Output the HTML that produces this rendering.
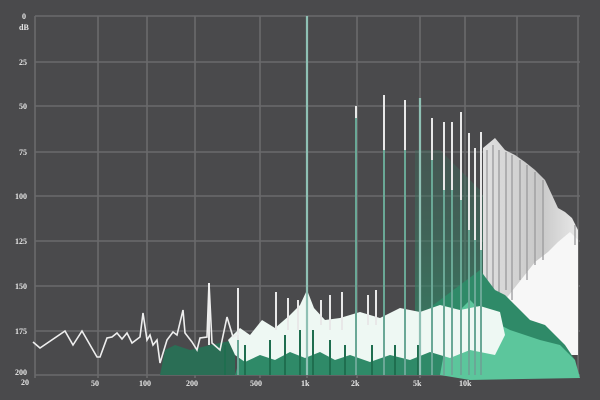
<!DOCTYPE html>
<html><head><meta charset="utf-8"><style>
html,body{margin:0;padding:0;background:#4a4a4c;width:600px;height:400px;overflow:hidden}
svg{display:block}
text{font-family:"Liberation Serif",serif;font-size:8px;fill:#e8e8e8;font-weight:bold}
</style></head><body>
<svg width="600" height="400" viewBox="0 0 600 400" xmlns="http://www.w3.org/2000/svg">
<defs>
<linearGradient id="bl" x1="0" y1="0" x2="1" y2="0">
<stop offset="0" stop-color="#e0e0e0"/><stop offset="0.6" stop-color="#c8c8c8"/><stop offset="1" stop-color="#e8e8e8"/>
</linearGradient>
<linearGradient id="gv" x1="0" y1="0" x2="0" y2="1">
<stop offset="0" stop-color="#3d6e5e" stop-opacity="0.5"/><stop offset="1" stop-color="#2f8a68"/>
</linearGradient>
</defs>
<rect width="600" height="400" fill="#4a4a4c"/>
<g stroke="#6a6a6c" stroke-width="1.6">
<line x1="35" y1="16" x2="580" y2="16"/>
<line x1="35" y1="62" x2="580" y2="62"/>
<line x1="35" y1="106" x2="580" y2="106"/>
<line x1="35" y1="152" x2="580" y2="152"/>
<line x1="35" y1="196" x2="580" y2="196"/>
<line x1="35" y1="241" x2="580" y2="241"/>
<line x1="35" y1="286" x2="580" y2="286"/>
<line x1="35" y1="331" x2="580" y2="331"/>
<line x1="35" y1="375" x2="580" y2="375"/>
<line x1="35" y1="16" x2="35" y2="378"/>
<line x1="98" y1="16" x2="98" y2="378"/>
<line x1="147" y1="16" x2="147" y2="378"/>
<line x1="195" y1="16" x2="195" y2="378"/>
<line x1="260" y1="16" x2="260" y2="378"/>
<line x1="307" y1="16" x2="307" y2="378"/>
<line x1="357" y1="16" x2="357" y2="378"/>
<line x1="420" y1="16" x2="420" y2="378"/>
<line x1="465" y1="16" x2="465" y2="378"/>
<line x1="517" y1="16" x2="517" y2="378"/>
<line x1="578" y1="16" x2="578" y2="378"/>
</g>
<!-- green tint behind spikes -->
<path d="M415,150 L440,150 L460,170 L480,190 L490,210 L495,280 L415,330 Z" fill="url(#gv)" opacity="0.7"/>
<!-- gray/white blob at right -->
<path d="M483,148 L495,138 L505,150 L515,155 L525,162 L535,170 L545,180 L552,195 L558,208 L565,212 L572,218 L578,230 L578,355 L483,355 Z" fill="url(#bl)"/>
<path d="M535,262 L548,252 L558,242 L570,232 L578,240 L578,355 L500,355 L505,300 Z" fill="#f7f7f7"/>
<g stroke="#9a9a9c" stroke-width="1.3">
<line x1="487" y1="150" x2="487" y2="290"/><line x1="493" y1="145" x2="493" y2="300"/>
<line x1="499" y1="150" x2="499" y2="300"/><line x1="506" y1="152" x2="506" y2="290"/>
<line x1="512" y1="155" x2="512" y2="300"/><line x1="520" y1="160" x2="520" y2="280"/>
<line x1="527" y1="165" x2="527" y2="280"/><line x1="535" y1="172" x2="535" y2="265"/>
<line x1="543" y1="180" x2="543" y2="260"/><line x1="575" y1="225" x2="575" y2="245"/>
</g>
<!-- green fill -->
<path d="M235,375 L245,340 L260,335 L280,330 L300,320 L307,300 L315,320 L340,328 L380,325 L420,315 L440,300 L460,285 L480,270 L495,290 L505,295 L515,305 L530,320 L545,325 L555,335 L565,345 L575,360 L578,375 Z" fill="#2f8a68"/>
<path d="M440,375 L450,320 L470,300 L490,320 L510,330 L540,340 L560,345 L575,360 L580,378 L470,380 Z" fill="#5cc69c"/>
<path d="M160,375 L165,350 L175,345 L190,350 L210,345 L235,340 L235,375 Z" fill="#2a6e55"/>
<!-- white noise region -->
<path d="M228,340 L240,328 L250,335 L262,320 L275,328 L290,315 L300,305 L307,290 L314,308 L325,320 L340,318 L360,312 L380,318 L400,308 L420,312 L440,305 L460,310 L480,306 L500,312 L505,335 L495,355 L470,350 L450,358 L430,352 L410,360 L390,355 L370,362 L350,355 L335,360 L320,352 L305,358 L290,352 L275,360 L260,355 L245,362 L235,355 Z" fill="#eef8f3"/>
<g stroke="#1f6e4f" stroke-width="2">
<line x1="300" y1="330" x2="300" y2="375"/><line x1="307" y1="315" x2="307" y2="375"/>
<line x1="313" y1="330" x2="313" y2="375"/><line x1="285" y1="335" x2="285" y2="375"/>
<line x1="270" y1="340" x2="270" y2="375"/><line x1="330" y1="340" x2="330" y2="375"/>
<line x1="345" y1="345" x2="345" y2="375"/><line x1="372" y1="345" x2="372" y2="375"/>
<line x1="395" y1="345" x2="395" y2="375"/><line x1="418" y1="345" x2="418" y2="375"/>
<line x1="245" y1="345" x2="245" y2="375"/><line x1="225" y1="345" x2="225" y2="375"/>
</g>
<!-- spikes: white tops -->
<g stroke="#e8e8e8" stroke-width="2">
<line x1="209" y1="283" x2="209" y2="345"/>
<line x1="238" y1="288" x2="238" y2="340"/>
<line x1="276" y1="292" x2="276" y2="330"/>
<line x1="288" y1="298" x2="288" y2="330"/>
<line x1="298" y1="300" x2="298" y2="330"/>
<line x1="321" y1="300" x2="321" y2="325"/>
<line x1="330" y1="295" x2="330" y2="330"/>
<line x1="342" y1="292" x2="342" y2="330"/>
<line x1="368" y1="295" x2="368" y2="325"/>
<line x1="376" y1="290" x2="376" y2="325"/>
<line x1="384" y1="95" x2="384" y2="150"/>
<line x1="405" y1="100" x2="405" y2="150"/>
<line x1="432" y1="118" x2="432" y2="160"/>
<line x1="444" y1="122" x2="444" y2="190"/>
<line x1="452" y1="122" x2="452" y2="190"/>
<line x1="461" y1="112" x2="461" y2="200"/>
<line x1="469" y1="133" x2="469" y2="230"/>
<line x1="475" y1="148" x2="475" y2="240"/>
<line x1="481" y1="132" x2="481" y2="250"/>
<line x1="356" y1="106" x2="356" y2="120"/>
</g>
<g stroke="#8fc0b4" stroke-width="2.2">
<line x1="307" y1="16" x2="307" y2="375"/>
<line x1="420" y1="98" x2="420" y2="375"/>
</g>
<g stroke="#6aa896" stroke-width="2">
<line x1="356" y1="118" x2="356" y2="375"/>
<line x1="384" y1="150" x2="384" y2="375"/>
<line x1="405" y1="150" x2="405" y2="375"/>
<line x1="432" y1="160" x2="432" y2="375"/>
<line x1="444" y1="190" x2="444" y2="375"/>
<line x1="452" y1="190" x2="452" y2="375"/>
<line x1="461" y1="200" x2="461" y2="375"/>
<line x1="469" y1="230" x2="469" y2="375"/>
<line x1="475" y1="240" x2="475" y2="375"/>
<line x1="481" y1="250" x2="481" y2="375"/>
<line x1="238" y1="340" x2="238" y2="375"/>
</g>
<polyline fill="none" stroke="#eeeeee" stroke-width="1.6" points="33,342 40,348 65,331 73,345 82,331 97,357 100,357 107,338 112,337 117,333 122,339 127,333 132,343 140,337 143,313 147,340 150,335 153,345 157,340 160,363 167,340 173,332 177,335 183,310 185,333 192,342 197,350 200,338 207,337 209,283 212,343 220,350 227,317 233,337 240,333"/>
<text x="22" y="19">0</text>
<text x="19" y="30">dB</text>
<text x="19" y="65">25</text>
<text x="19" y="109">50</text>
<text x="19" y="155">75</text>
<text x="15" y="199">100</text>
<text x="15" y="244">125</text>
<text x="15" y="289">150</text>
<text x="15" y="334">175</text>
<text x="15" y="375">200</text>
<text x="21" y="385">20</text>
<text x="91" y="386">50</text>
<text x="139" y="386">100</text>
<text x="186" y="386">200</text>
<text x="250" y="386">500</text>
<text x="301" y="386">1k</text>
<text x="351" y="386">2k</text>
<text x="413" y="386">5k</text>
<text x="459" y="386">10k</text>
</svg>
</body></html>
